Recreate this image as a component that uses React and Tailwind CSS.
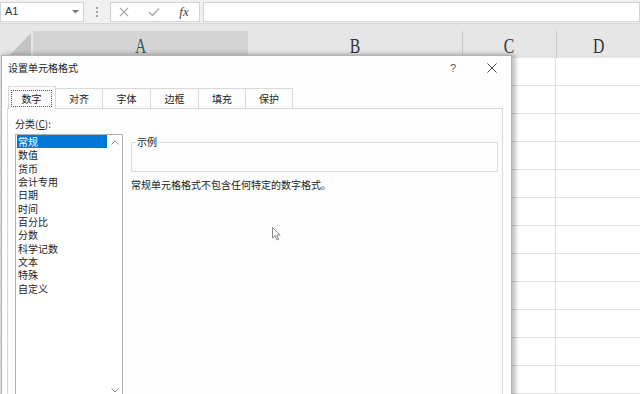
import React from "react";

const cjk = "font-['Microsoft_YaHei','Noto_Sans_CJK_SC',sans-serif]";

export default function App() {
  const rows = Array.from({ length: 12 });
  const items = ["常规", "数值", "货币", "会计专用", "日期", "时间", "百分比", "分数", "科学记数", "文本", "特殊", "自定义"];
  const tabs = [
    { t: "数字", w: "w-[48px]" },
    { t: "对齐", w: "w-[47px]" },
    { t: "字体", w: "w-[48px]" },
    { t: "边框", w: "w-[48px]" },
    { t: "填充", w: "w-[47px]" },
    { t: "保护", w: "w-[47px]" },
  ];
  return (
    <div className="relative h-[394px] w-[640px] overflow-hidden bg-white">
      {/* formula bar */}
      <div className="flex h-[24px] items-center border-b border-[#d6d6d6] bg-[#f1f1f1] font-['Liberation_Sans',sans-serif]">
        <div className="flex h-[20px] w-[84px] items-center justify-between border border-[#d2d2d2] bg-white pl-[4px] pr-[4px] text-[11px] text-[#333]">
          <span>A1</span>
          <svg width="7" height="4" viewBox="0 0 7 4">
            <path d="M0 0 L7 0 L3.5 3.5Z" fill="#777" />
          </svg>
        </div>
        <div className="flex w-[26px] flex-col items-center gap-[2px]">
          <span className="h-[2px] w-[2px] bg-[#a8a8a8]" />
          <span className="h-[2px] w-[2px] bg-[#a8a8a8]" />
          <span className="h-[2px] w-[2px] bg-[#a8a8a8]" />
        </div>
        <div className="flex h-[20px] w-[90px] items-center border border-[#d2d2d2] bg-white">
          <span className="ml-[3px] flex w-[20px] justify-center">
            <svg width="10" height="10" viewBox="0 0 10 10">
              <path d="M1 1 L9 9 M9 1 L1 9" stroke="#a6a6a6" strokeWidth="1.1" />
            </svg>
          </span>
          <span className="ml-[10px] flex w-[20px] justify-center">
            <svg width="12" height="10" viewBox="0 0 12 10">
              <path d="M1 5 L4.5 8.5 L11 1.5" stroke="#a6a6a6" strokeWidth="1.3" fill="none" />
            </svg>
          </span>
          <span className="ml-[10px] flex w-[20px] justify-center font-['Liberation_Serif',serif] text-[13px] italic leading-none text-[#444]">
            fx
          </span>
        </div>
        <div className="ml-[3px] h-[20px] flex-1 border border-[#d2d2d2] bg-white" />
      </div>

      {/* column header */}
      <div className="bg-[#e6e6e6] pt-[7px]">
        <div className="flex h-[27px] font-['Liberation_Serif',serif] text-[21px] leading-none text-[#333]">
          <div className="relative w-[33px]">
            <svg className="absolute left-0 top-0" width="33" height="27" viewBox="0 0 33 27">
              <path d="M31 2 L31 25 L9 25 Z" fill="#c4c4c4" />
            </svg>
          </div>
          <div className="flex w-[215px] justify-center bg-[#d4d4d4] pt-[5px] text-[#2c5a60]">
            <span className="inline-block scale-x-75">A</span>
          </div>
          <div className="flex w-[214px] justify-center pt-[5px]">
            <span className="inline-block scale-x-75">B</span>
          </div>
          <div className="flex w-[94px] justify-center border-l border-[#c8c8c8] pt-[5px]">
            <span className="inline-block scale-x-75">C</span>
          </div>
          <div className="flex flex-1 justify-center border-l border-[#c8c8c8] pt-[5px]">
            <span className="inline-block scale-x-75">D</span>
          </div>
        </div>
      </div>

      {/* grid */}
      <div className="flex flex-col">
        {rows.map((_, i) => (
          <div key={i} className="flex h-[28px] border-b border-[#e0e0e0]">
            <div className="w-[33px] border-r border-[#d0d0d0] bg-[#e6e6e6]" />
            <div className="w-[215px] border-r border-[#e0e0e0]" />
            <div className="w-[214px] border-r border-[#e0e0e0]" />
            <div className="w-[94px] border-r border-[#e0e0e0]" />
            <div className="flex-1" />
          </div>
        ))}
      </div>

      {/* dialog */}
      <div
        className={`absolute left-[1px] top-[55px] flex h-[350px] w-[511px] flex-col border border-[#b4b4b4] bg-[#fdfdfd] text-[10px] text-[#222] shadow-[4px_0_4px_rgba(0,0,0,0.2),0_-2px_5px_rgba(0,0,0,0.12)] ${cjk}`}
      >
        <div className="flex h-[24px] items-center pl-[6px] pr-[14px]">
          <span className="leading-none">设置单元格格式</span>
          <span className="ml-auto flex w-[10px] justify-center font-['Liberation_Sans',sans-serif] text-[11px] leading-none text-[#555]">
            ?
          </span>
          <span className="ml-[29px] flex w-[10px] justify-center">
            <svg width="10" height="10" viewBox="0 0 10 10">
              <path d="M0.5 0.5 L9.5 9.5 M9.5 0.5 L0.5 9.5" stroke="#444" strokeWidth="1" />
            </svg>
          </span>
        </div>

        {/* tabs */}
        <div className="flex h-[28px] items-end pl-[6px] pt-[6px]">
          {tabs.map((tab, i) =>
            i === 0 ? (
              <div
                key={tab.t}
                className={`relative z-10 -mb-px flex h-[23px] ${tab.w} items-start border-x border-t border-[#d9d9d9] bg-[#fdfdfd] pl-[2px] pr-[3px] pt-[3px]`}
              >
                <div className="flex h-[17px] flex-1 items-center justify-center border border-dotted border-[#555]">
                  {tab.t}
                </div>
              </div>
            ) : (
              <div
                key={tab.t}
                className={`flex h-[20px] ${tab.w} items-center justify-center border-r border-t border-[#d9d9d9] bg-[#fdfdfd]`}
              >
                {tab.t}
              </div>
            )
          )}
        </div>

        {/* panel */}
        <div className="ml-[5px] flex w-[496px] flex-1 flex-col border border-[#d9d9d9] pl-[7px] pt-[7px]">
          <div className="h-[16px] leading-[16px]">
            分类(<span className="underline">C</span>):
          </div>
          <div className="mt-[2px] flex">
            <div className="flex h-[264px] w-[108px] border border-[#b0b0b0] bg-white pl-[1px]">
              <div className="flex w-[90px] flex-col">
                {items.map((it, i) => (
                  <div
                    key={it}
                    className={`h-[13.35px] overflow-hidden pl-[1px] leading-[13.35px] ${i === 0 ? "bg-[#0078d7] text-white" : ""}`}
                  >
                    {it}
                  </div>
                ))}
              </div>
              <div className="flex flex-1 flex-col justify-between">
                <div className="flex h-[14px] items-center justify-center">
                  <svg width="8" height="5" viewBox="0 0 8 5">
                    <path d="M0.5 4.5 L4 1 L7.5 4.5" stroke="#8c8c8c" fill="none" strokeWidth="1" />
                  </svg>
                </div>
                <div className="flex h-[14px] items-center justify-center">
                  <svg width="8" height="5" viewBox="0 0 8 5">
                    <path d="M0.5 0.5 L4 4 L7.5 0.5" stroke="#8c8c8c" fill="none" strokeWidth="1" />
                  </svg>
                </div>
              </div>
            </div>
            <div className="ml-[8px] flex flex-col pt-[8px]">
              <div className="relative h-[30px] w-[367px] border border-[#dcdcdc]">
                <span className="absolute -top-[8px] left-[4px] bg-[#fdfdfd] px-[1px] leading-[14px]">示例</span>
              </div>
              <div className="mt-[5px] leading-[16px]">常规单元格格式不包含任何特定的数字格式。</div>
            </div>
          </div>
        </div>
      </div>

      {/* mouse cursor */}
      <svg className="absolute left-[272px] top-[227px]" width="10" height="14" viewBox="0 0 10 14">
        <path
          d="M0.5 0.5 L0.5 11 L3 8.6 L5 13 L6.6 12.3 L4.7 8 L8.2 8 Z"
          fill="#fff"
          stroke="#888"
          strokeWidth="1"
          strokeLinejoin="round"
        />
      </svg>
    </div>
  );
}
